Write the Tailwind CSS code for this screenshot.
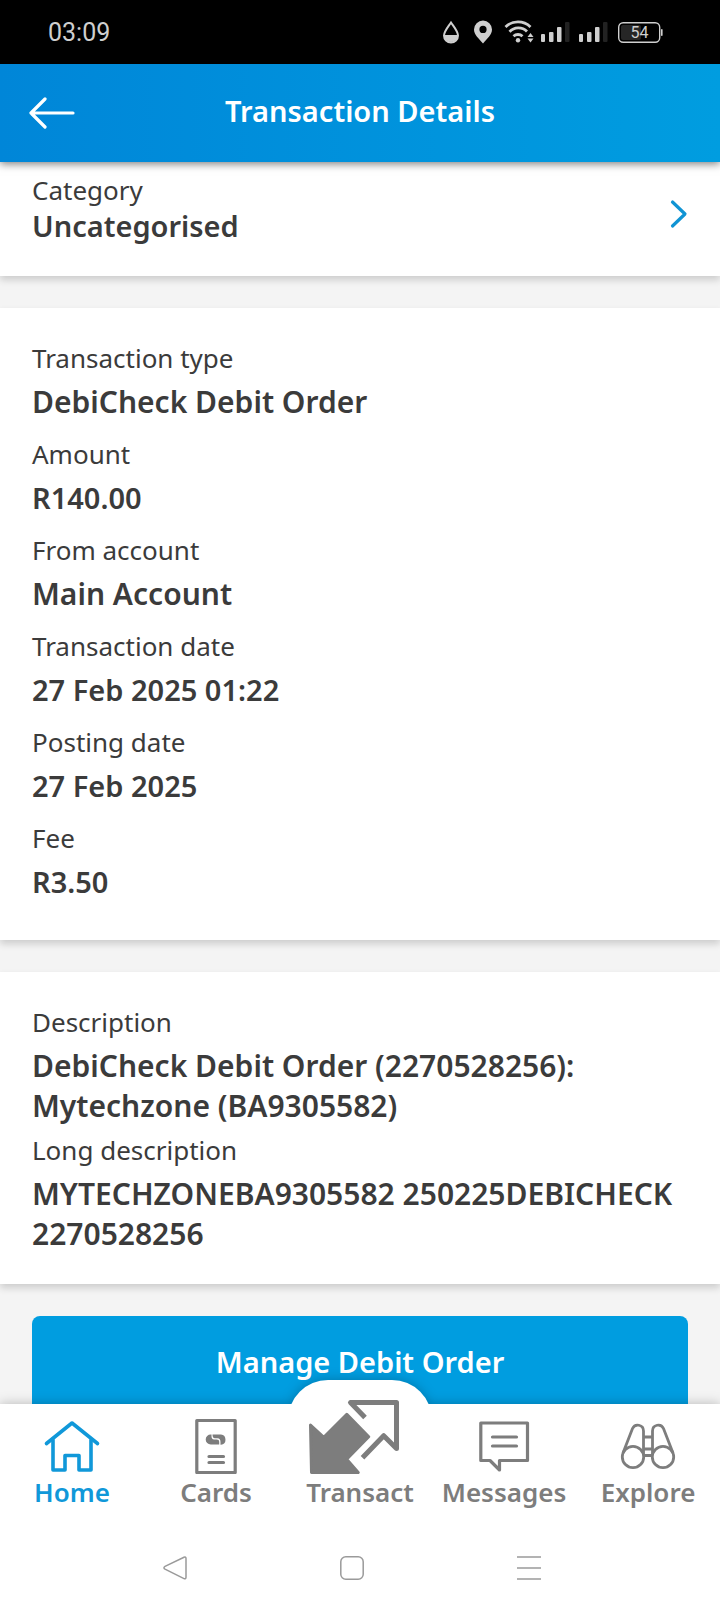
<!DOCTYPE html>
<html lang="en">
<head>
<meta charset="utf-8">
<meta name="viewport" content="width=device-width, initial-scale=1">
<title>Transaction Details</title>
<script src="https://cdn.jsdelivr.net/npm/@tailwindcss/browser@4"></script>
</head>
<body class="flex h-screen flex-col overflow-hidden bg-[#f4f4f4] font-['Noto_Sans',sans-serif] text-[#3b3b3b]">

<!-- Device status bar -->
<div class="flex h-16 shrink-0 items-center justify-between bg-black pr-14 pl-12 text-[#cfcfcf]">
  <time class="pt-0.5 font-['Roboto',sans-serif] text-[25px]">03:09</time>
  <svg class="h-6 w-[222px]" viewBox="442 20 222 24" fill="#cfcfcf" role="img" aria-label="Status icons">
    <path d="M451 22.500C448 27 444 31.500 444 35.500a7 7 0 0 0 14 0c0-4-4-8.500-7-13z" fill="none" stroke="#cfcfcf" stroke-width="2"/>
    <path d="M444 35h14a7 7 0 0 1-14 0z"/>
    <path fill-rule="evenodd" d="M483 20.500a9 9 0 0 0-9 9c0 5.500 5 9 9 14 4-5 9-8.500 9-14a9 9 0 0 0-9-9zm0 5.300a3.600 3.600 0 1 1 0 7.200 3.600 3.600 0 0 1 0-7.200z"/>
    <g fill="none" stroke="#cfcfcf" stroke-width="2.800"><path d="M505.500 27a18 18 0 0 1 25 0"/><path d="M509.500 31.800a12 12 0 0 1 17.500-.3"/><path d="M513.500 36.300a6.500 6.500 0 0 1 9 0"/></g>
    <circle cx="518" cy="40.200" r="2.200"/>
    <path d="M527.500 37l3-4 3 4zM527.500 38.500h6l-3 4z"/>
    <rect x="541" y="34" width="4" height="8" rx="1"/><rect x="549" y="32" width="4.500" height="10" rx="1"/><rect x="557" y="27" width="4.500" height="15" rx="1"/><rect x="565" y="22" width="4.500" height="20" rx="1" fill="#222"/>
    <rect x="579" y="34" width="4" height="8" rx="1"/><rect x="587" y="32" width="4.500" height="10" rx="1"/><rect x="595" y="27" width="4.500" height="15" rx="1"/><rect x="603" y="22" width="4.500" height="20" rx="1" fill="#222"/>
    <rect x="621" y="25" width="20" height="15" rx="2" fill="#262626"/>
    <rect x="618.700" y="22.700" width="41" height="19.500" rx="4.500" fill="none" stroke="#cfcfcf" stroke-width="1.400"/>
    <rect x="661" y="29" width="1.600" height="7" rx=".8"/>
    <text x="639.500" y="38" font-family="Roboto, sans-serif" font-size="16" text-anchor="middle">54</text>
  </svg>
</div>

<!-- App header -->
<header class="relative z-10 flex h-[98px] shrink-0 items-center bg-linear-to-r from-[#0086d8] to-[#009de0] px-7 text-white shadow-[0_2px_8px_rgba(0,0,0,0.5)]">
  <button type="button" aria-label="Back" class="w-12">
    <svg class="h-8 w-12" viewBox="28 97 48 32" fill="none" stroke="currentColor" stroke-width="3.200" stroke-linecap="round" stroke-linejoin="round"><path d="M73 113H31M45 99L31 113l14 14"/></svg>
  </button>
  <h1 class="flex-1 pr-12 pb-1 text-center text-[29px] leading-10 font-semibold">Transaction Details</h1>
</header>

<main class="min-h-0 flex-1 overflow-hidden">
  <button type="button" class="flex h-[114px] w-full items-start justify-between bg-white px-8 pt-2.5 text-left shadow-[0_4px_7px_rgba(0,0,0,0.16)]">
    <span class="flex flex-col leading-9">
      <span class="text-[26px]">Category</span>
      <span class="text-[29px] font-semibold">Uncategorised</span>
    </span>
    <svg class="mt-6.5 h-8 w-5" viewBox="668 199 20 32" fill="none" stroke="#1094d4" stroke-width="3.200" stroke-linecap="round" stroke-linejoin="round"><path d="M672.500 203l12.500 12-12.500 12"/></svg>
  </button>

  <dl class="mt-8 flex flex-col gap-3 bg-white px-8 pt-[30px] pb-[38px] leading-10 shadow-[0_4px_7px_rgba(0,0,0,0.16)]">
    <div><dt class="mb-1 text-[26px]">Transaction type</dt><dd class="text-[30px] font-semibold">DebiCheck Debit Order</dd></div>
    <div><dt class="mb-1 text-[26px]">Amount</dt><dd class="text-[29px] font-semibold">R140.00</dd></div>
    <div><dt class="mb-1 text-[26px]">From account</dt><dd class="text-[30px] font-semibold">Main Account</dd></div>
    <div><dt class="mb-1 text-[26px]">Transaction date</dt><dd class="text-[29px] font-semibold">27 Feb 2025 01:22</dd></div>
    <div><dt class="mb-1 text-[26px]">Posting date</dt><dd class="text-[29px] font-semibold">27 Feb 2025</dd></div>
    <div><dt class="mb-1 text-[26px]">Fee</dt><dd class="text-[29px] font-semibold">R3.50</dd></div>
  </dl>

  <dl class="mt-8 flex flex-col gap-1 bg-white px-8 pt-[30px] pb-[30px] leading-10 shadow-[0_4px_7px_rgba(0,0,0,0.16)]">
    <div><dt class="mb-1 text-[26px]">Description</dt><dd class="text-[30px] font-semibold">DebiCheck Debit Order (2270528256):<br>Mytechzone (BA9305582)</dd></div>
    <div><dt class="mb-1 text-[26px]">Long description</dt><dd class="text-[30px] font-semibold">MYTECHZONEBA9305582 250225DEBICHECK<br>2270528256</dd></div>
  </dl>

  <div class="px-8 pt-8">
    <button type="button" class="h-24 w-full rounded-lg bg-[#009de0] pb-1 text-[29px] leading-10 font-semibold text-white">Manage Debit Order</button>
  </div>
</main>

<footer class="relative isolate shrink-0">
  <!-- White bar with the raised tab in its middle, sharing one shadow -->
  <div class="absolute inset-0 -z-10 drop-shadow-[0_0_6px_rgba(0,0,0,0.25)]">
    <div class="absolute inset-0 bg-white"></div>
    <div class="absolute -top-6 left-2/5 h-20 w-1/5 rounded-t-[40px] bg-white"></div>
  </div>

  <nav class="grid grid-cols-5 items-end pt-3.5 text-[26px] leading-9 font-semibold text-[#7d7d7d]">
    <a href="#" aria-current="page" class="flex flex-col items-center text-[#1098d9]">
      <svg class="h-14 w-15" viewBox="42 1418 60 56" fill="none" stroke="currentColor" stroke-width="3.600" stroke-linecap="round" stroke-linejoin="round"><path d="M46.500 1443.500L72 1423l25.500 20.500"/><path d="M53 1440v30h12v-14.500h14V1470h12v-30"/></svg>
      Home
    </a>
    <a href="#" class="flex flex-col items-center">
      <svg class="h-14 w-15" viewBox="186 1418 60 56" fill="none" stroke="currentColor" stroke-width="3.200" stroke-linecap="round" stroke-linejoin="round"><rect x="196.800" y="1420.500" width="38.400" height="52"/><path d="M209 1456.500h14.500M209 1462.500h14.500"/><path d="M211.500 1434.500h-.8a5 5 0 0 0 0 10h8.500v-2.500c0-1.800-1-2.500-2.500-2.500h-2.500c-2 0-2.700-1.500-2.700-3z" fill="currentColor" stroke="none"/><path d="M212.500 1434.500h8.500a5.200 5.200 0 0 1 0 10.300h-.5v-2.500c0-2.500-1-4-3-4h-2.500c-1.800 0-2.500-1.500-2.500-3.800z" fill="currentColor" stroke="none"/></svg>
      Cards
    </a>
    <a href="#" class="-mt-10 flex flex-col items-center">
      <svg class="h-20 w-28" viewBox="304 1394 112 80" fill="none" stroke="currentColor" stroke-width="5" stroke-linejoin="round"><path fill="currentColor" stroke-width="3" d="M310.500 1425l13.300 12.300 23-23 21.900 22.400-22 22.500 11.500 13.300h-46.700z"/><path d="M365 1417.500l-14.500-15h46v46l-12.800-12.800-21.200 22"/></svg>
      Transact
    </a>
    <a href="#" class="flex flex-col items-center">
      <svg class="h-14 w-15" viewBox="474 1418 60 56" fill="none" stroke="currentColor" stroke-width="3.200" stroke-linecap="round" stroke-linejoin="round"><path d="M480.800 1423h46.700v37.500h-28V1470l-9.500-9.500h-9.200z"/><path d="M492.500 1437h24M492.500 1446h24"/></svg>
      Messages
    </a>
    <a href="#" class="flex flex-col items-center">
      <svg class="h-14 w-15" viewBox="618 1418 60 56" fill="none" stroke="currentColor" stroke-width="2.800"><circle cx="633" cy="1457" r="10.700"/><circle cx="663" cy="1457" r="10.700"/><path d="M623 1453l9.500-24.500c2.500-5.500 11-4 11 2.500v24M673 1453l-9.500-24.500c-2.500-5.500-11-4-11 2.500v24M643.500 1437h9M643.500 1449h9M643.500 1455.500h9"/></svg>
      Explore
    </a>
  </nav>

  <!-- Device navigation keys -->
  <div class="flex h-[102px] items-center justify-center gap-[153px] pt-3.5 pr-4 text-[#9a9a9a]">
    <button type="button" aria-label="System back"><svg class="size-6" viewBox="0 0 24 24" fill="none" stroke="currentColor" stroke-width="1.500" stroke-linejoin="round"><path d="M21 1.200L2 10.400c-1.400.8-1.400 2 0 2.800l19 9.400c1.200.5 2 0 2-1.300V2.500c0-1.300-.8-1.800-2-1.300z"/></svg></button>
    <button type="button" aria-label="System home"><svg class="size-6" viewBox="0 0 24 24" fill="none" stroke="currentColor" stroke-width="1.500"><rect x=".8" y=".8" width="22.400" height="22.400" rx="5"/></svg></button>
    <button type="button" aria-label="Recent apps"><svg class="size-6" viewBox="0 0 24 24" fill="none" stroke="currentColor" stroke-width="1.700"><path d="M0 1h24M0 12h24M0 23h24"/></svg></button>
  </div>
</footer>
</body>
</html>
